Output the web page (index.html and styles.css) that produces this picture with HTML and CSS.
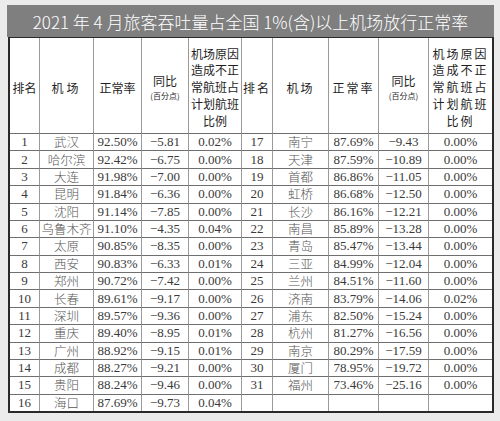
FILE: index.html
```html
<!DOCTYPE html>
<html lang="zh-CN">
<head>
    <meta charset="UTF-8">
    <meta name="viewport" content="width=device-width, initial-scale=1.0">
    <title>机场放行正常率</title>
    <link rel="stylesheet" href="styles.css">
</head>
<body>
    <div class="sheet">
        <!--标题-->
        <div class="title">2021 年 4 月旅客吞吐量占全国 1%(含)以上机场放行正常率</div>
        <!--表格-->
        <div class="box">
            <table>
                <colgroup>
                    <col style="width:30px"><col style="width:54px"><col style="width:48px"><col style="width:47px"><col style="width:53px">
                    <col style="width:31px"><col style="width:56px"><col style="width:50px"><col style="width:50px"><col style="width:63px">
                </colgroup>
                <thead>
                    <tr>
                        <th>排名</th>
                        <th class="sp">机场</th>
                        <th>正常率</th>
                        <th>同比<small>(百分点)</small></th>
                        <th class="multi">机场原因<br>造成不正<br>常航班占<br>计划航班<br>比例</th>
                        <th class="wide">排名</th>
                        <th class="wide">机场</th>
                        <th class="wide">正常率</th>
                        <th>同比<small>(百分点)</small></th>
                        <th class="multi wide last">机场原因<br>造成不正<br>常航班占<br>计划航班<br>比例</th>
                    </tr>
                </thead>
                <tbody id="rows"></tbody>
            </table>
        </div>
    </div>
    <script>
        // 左右两半的数据：排名, 机场, 正常率, 同比, 比例
        var data = [
            [1, '武汉', '92.50%', '5.81', '0.02%'],
            [2, '哈尔滨', '92.42%', '6.75', '0.00%'],
            [3, '大连', '91.98%', '7.00', '0.00%'],
            [4, '昆明', '91.84%', '6.36', '0.00%'],
            [5, '沈阳', '91.14%', '7.85', '0.00%'],
            [6, '乌鲁木齐', '91.10%', '4.35', '0.04%'],
            [7, '太原', '90.85%', '8.35', '0.00%'],
            [8, '西安', '90.83%', '6.33', '0.01%'],
            [9, '郑州', '90.72%', '7.42', '0.00%'],
            [10, '长春', '89.61%', '9.17', '0.00%'],
            [11, '深圳', '89.57%', '9.36', '0.00%'],
            [12, '重庆', '89.40%', '8.95', '0.01%'],
            [13, '广州', '88.92%', '9.15', '0.01%'],
            [14, '成都', '88.27%', '9.21', '0.00%'],
            [15, '贵阳', '88.24%', '9.46', '0.00%'],
            [16, '海口', '87.69%', '9.73', '0.04%'],
            [17, '南宁', '87.69%', '9.43', '0.00%'],
            [18, '天津', '87.59%', '10.89', '0.00%'],
            [19, '首都', '86.86%', '11.05', '0.00%'],
            [20, '虹桥', '86.68%', '12.50', '0.00%'],
            [21, '长沙', '86.16%', '12.21', '0.00%'],
            [22, '南昌', '85.89%', '13.28', '0.00%'],
            [23, '青岛', '85.47%', '13.44', '0.00%'],
            [24, '三亚', '84.99%', '12.04', '0.00%'],
            [25, '兰州', '84.51%', '11.60', '0.00%'],
            [26, '济南', '83.79%', '14.06', '0.02%'],
            [27, '浦东', '82.50%', '15.24', '0.00%'],
            [28, '杭州', '81.27%', '16.56', '0.00%'],
            [29, '南京', '80.29%', '17.59', '0.00%'],
            [30, '厦门', '78.95%', '19.72', '0.00%'],
            [31, '福州', '73.46%', '25.16', '0.00%']
        ]

        function cells(r) {
            if (!r) {
                return '<td></td><td></td><td></td><td></td><td class="last"></td>'
            }
            return '<td class="num">' + r[0] + '</td>' +
                '<td class="name">' + r[1] + '</td>' +
                '<td class="num">' + r[2] + '</td>' +
                '<td class="num">&minus;' + r[3] + '</td>' +
                '<td class="num">' + r[4] + '</td>'
        }

        var html = ''
        for (var i = 0; i < 16; i++) {
            html += '<tr>' + cells(data[i]) + cells(data[i + 16]) + '</tr>'
        }
        document.getElementById('rows').innerHTML = html
    </script>
</body>
</html>
```

FILE: styles.css
```css
*{
    margin: 0;
    padding: 0;
}
body{
    background-color: #ebebeb;
    width: 500px;
    height: 421px;
    overflow: hidden;
}
.sheet{
    padding: 5px 6px 0 7px;
}
.title{
    height: 32px;
    box-sizing: border-box;
    padding-top: 3px;
    background-color: #7f7f7f;
    color: #fff;
    font-family: "Noto Sans CJK SC", sans-serif;
    font-weight: 300;
    font-size: 17px;
    line-height: 28px;
    text-align: center;
}
.box{
    margin-left: 1px;
    border: 2px solid #2a2a2a;
    border-top-width: 1px;
    background-color: #fff;
}
table{
    width: 482px;
    height: 373px;
    table-layout: fixed;
    border-collapse: separate;
    border-spacing: 0;
}
th, td{
    border-right: 1px solid #9a9a9a;
    border-bottom: 1px solid #6f6f6f;
    text-align: center;
    white-space: nowrap;
}
th.last, td:last-child{
    border-right: 0;
}
tbody tr:last-child td{
    border-bottom: 0;
}
th{
    height: 91px;
    font-family: "Noto Sans CJK SC", sans-serif;
    font-weight: normal;
    font-size: 12px;
    line-height: 16px;
    color: #1e1e1e;
    padding-top: 4px;
}
th.sp{
    letter-spacing: 3px;
}
th.wide{
    letter-spacing: 2px;
}
th.multi{
    line-height: 16.7px;
}
th small{
    display: block;
    font-size: 8px;
    line-height: 14px;
    letter-spacing: 0;
}
td{
    height: 16px;
    font-size: 13px;
    line-height: 14px;
    color: #3a3a3a;
}
td.num{
    font-family: "Liberation Serif", serif;
}
td.name{
    font-family: "Noto Sans CJK SC", sans-serif;
    font-weight: 300;
    font-size: 12.5px;
    color: #555;
}
```
